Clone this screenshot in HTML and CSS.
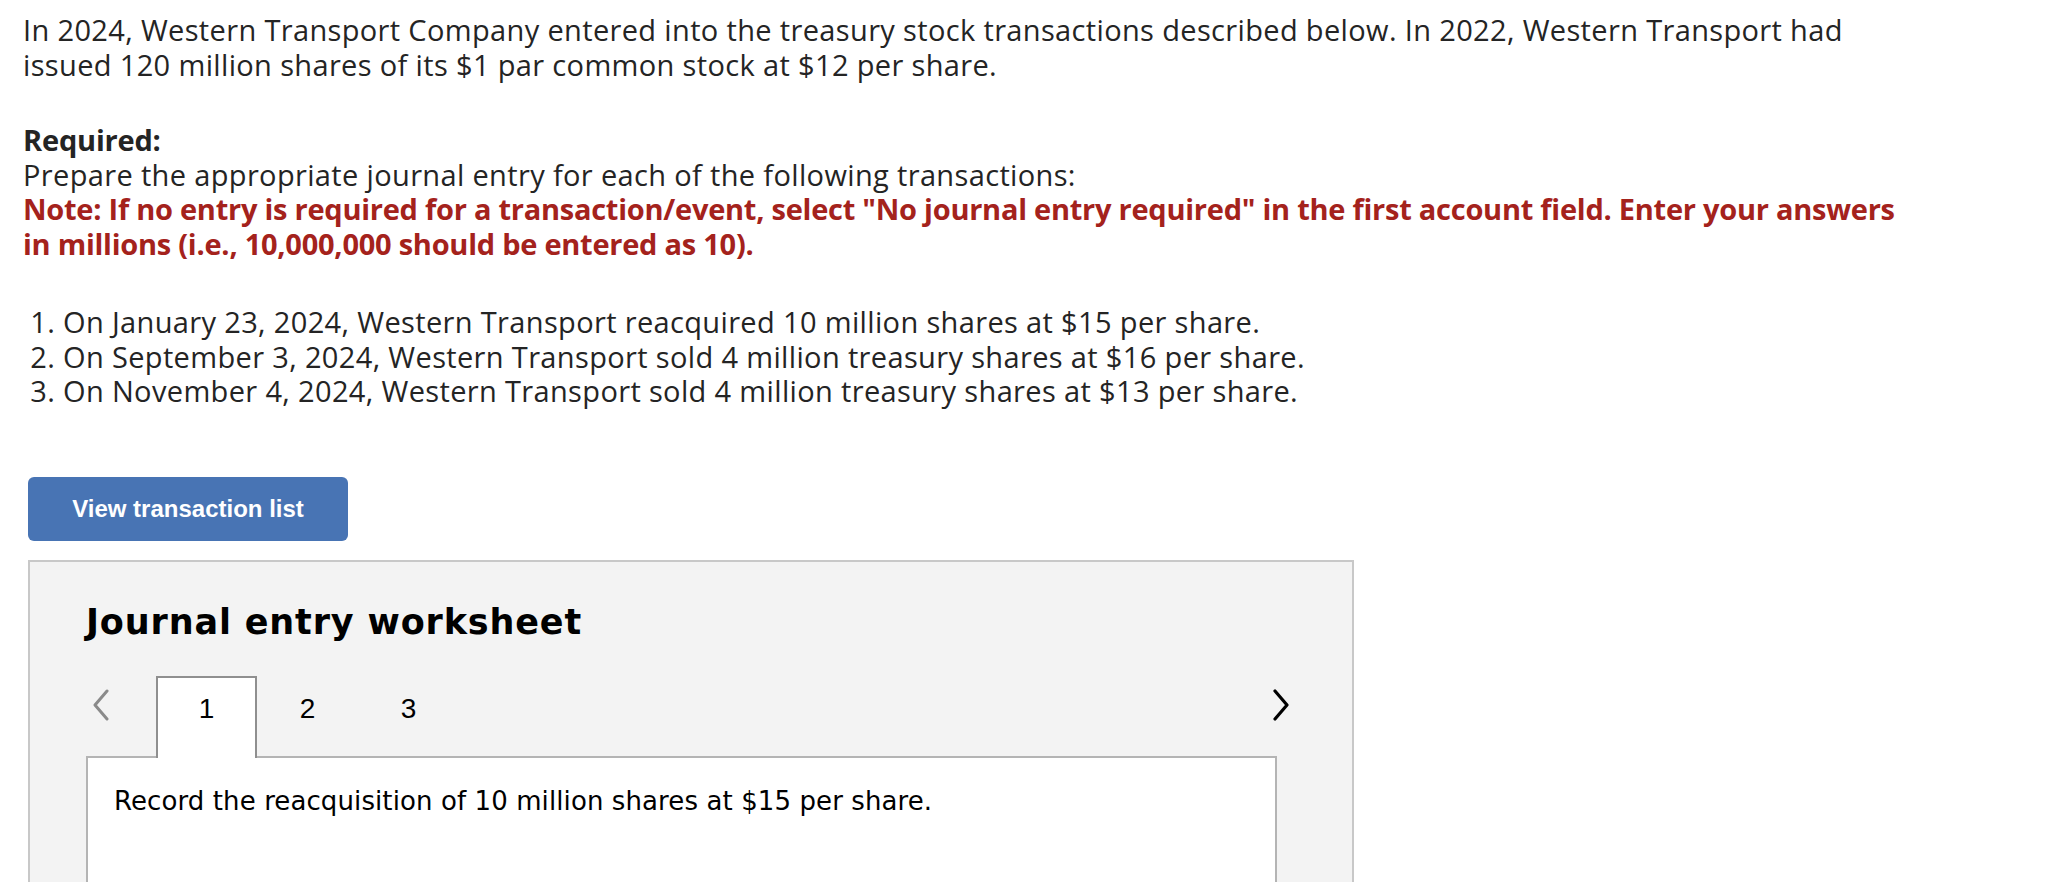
FILE: index.html
```html
<!DOCTYPE html>
<html lang="en">
<head>
<meta charset="utf-8">
<title>Journal entry worksheet</title>
<link rel="stylesheet" href="styles.css">
</head>
<body>
<div class="page">
  <p class="intro">In 2024, Western Transport Company entered into the treasury stock transactions described below. In 2022, Western Transport had issued 120 million shares of its $1 par common stock at $12 per share.</p>
  <div class="required">
    <div class="req-title">Required:</div>
    <div>Prepare the appropriate journal entry for each of the following transactions:</div>
    <div class="note">Note: If no entry is required for a transaction/event, select "No journal entry required" in the first account field. Enter your answers in millions (i.e., 10,000,000 should be entered as 10).</div>
  </div>
  <ol class="tx">
    <li>On January 23, 2024, Western Transport reacquired 10 million shares at $15 per share.</li>
    <li>On September 3, 2024, Western Transport sold 4 million treasury shares at $16 per share.</li>
    <li>On November 4, 2024, Western Transport sold 4 million treasury shares at $13 per share.</li>
  </ol>
  <button class="btn" type="button">View transaction list</button>
  <section class="worksheet">
    <h2 class="ws-title">Journal entry worksheet</h2>
    <div class="tabs-row">
      <span class="arrow prev"><svg width="20" height="32" viewBox="0 0 20 32"><polyline points="16,2 4,16 16,30" fill="none" stroke="#8a8a8a" stroke-width="3" stroke-linecap="round" stroke-linejoin="round"/></svg></span>
      <div class="tab active">1</div>
      <div class="tab">2</div>
      <div class="tab">3</div>
      <span class="spacer"></span>
      <span class="arrow next"><svg width="20" height="32" viewBox="0 0 20 32"><polyline points="4,2 16,16 4,30" fill="none" stroke="#000" stroke-width="3.2" stroke-linecap="round" stroke-linejoin="round"/></svg></span>
    </div>
    <div class="entry-box">
      <p class="entry-text">Record the reacquisition of 10 million shares at $15 per share.</p>
    </div>
  </section>
</div>
</body>
</html>
```
FILE: styles.css
```css
html, body {
  margin: 0;
  padding: 0;
  background: #ffffff;
}
body {
  overflow: hidden;
  height: 882px;
}
.page {
  padding: 13px 0 0 23px;
  width: 1900px;
  font-family: "Open Sans", Lato, sans-serif;
  font-size: 29px;
  line-height: 34.5px;
  letter-spacing: 0.35px;
  color: #242424;
}
.intro {
  margin: 0;
}
.required {
  margin-top: 41px;
}
.req-title {
  font-weight: 700;
  letter-spacing: -0.2px;
}
.note {
  color: #a4221c;
  font-weight: 700;
  letter-spacing: -0.25px;
}
.tx {
  margin: 44px 0 0 0;
  padding-left: 40px;
}
.btn {
  display: block;
  margin: 68px 0 0 5px;
  width: 320px;
  height: 64px;
  border: none;
  border-radius: 6px;
  background: #4874b4;
  color: #ffffff;
  font-family: "Liberation Sans", Arial, sans-serif;
  font-weight: 700;
  font-size: 24px;
  letter-spacing: 0;
  padding: 0;
}
.worksheet {
  margin: 19px 0 0 5px;
  width: 1326px;
  height: 400px;
  border: 2px solid #c8c8c8;
  background: #f3f3f3;
  padding: 40px 75px 0 56px;
  box-sizing: border-box;
  letter-spacing: 0;
}
.ws-title {
  margin: 0;
  font-family: "DejaVu Sans", Verdana, sans-serif;
  font-weight: 700;
  font-size: 35px;
  line-height: 41px;
  letter-spacing: 0.85px;
  color: #000;
}
.tabs-row {
  display: flex;
  align-items: flex-start;
  margin-top: 33px;
  margin-right: -14px;
  height: 80px;
  position: relative;
  z-index: 1;
}
.arrow {
  display: flex;
  align-items: center;
  height: 32px;
  margin-top: 13px;
}
.arrow.prev {
  width: 70px;
  padding-left: 5px;
  box-sizing: border-box;
}
.spacer {
  flex: 1;
}
.tab {
  width: 101px;
  height: 82px;
  box-sizing: border-box;
  padding-top: 15px;
  text-align: center;
  font-family: "Liberation Sans", Arial, sans-serif;
  font-size: 28px;
  line-height: 32px;
  color: #000;
  border: 2px solid transparent;
  border-bottom: none;
}
.tab.active {
  background: #ffffff;
  border-color: #8f8f8f;
}
.entry-box {
  background: #ffffff;
  border: 2px solid #b4b4b4;
  height: 300px;
  padding: 28px 26px 0 26px;
  box-sizing: border-box;
}
.entry-text {
  margin: 0;
  font-family: "DejaVu Sans", Verdana, sans-serif;
  font-size: 26px;
  line-height: 30px;
  letter-spacing: 0.1px;
  color: #000;
}
```
